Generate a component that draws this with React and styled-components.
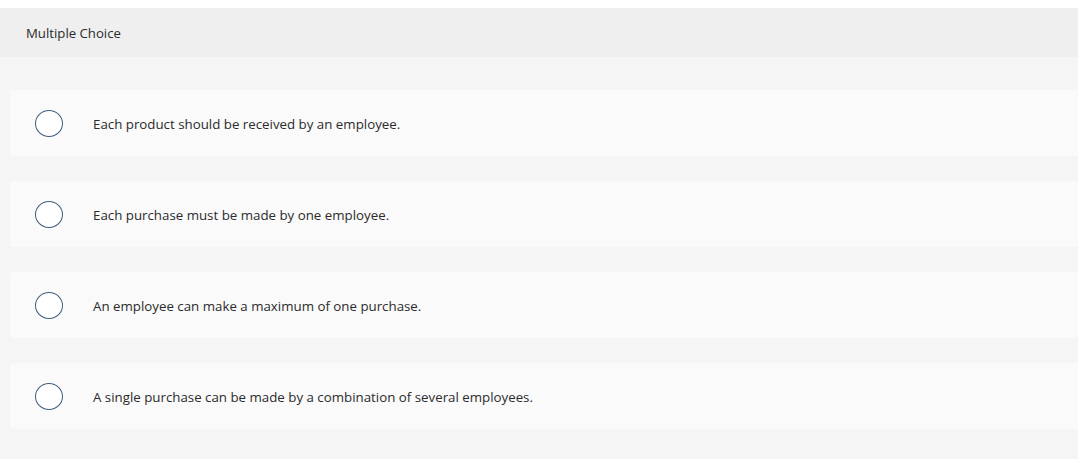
import React from "react";
import styled, { createGlobalStyle } from "styled-components";

const Global = createGlobalStyle`
  html, body { margin: 0; padding: 0; background: #ffffff; }
  body { font-family: "Open Sans", Lato, sans-serif; }
`;

const Page = styled.div`
  padding-top: 8px;
  background: #ffffff;
  min-height: 451px;
`;

const Header = styled.div`
  height: 49px;
  background: #efefef;
  display: flex;
  align-items: center;
  padding-left: 26px;
  padding-top: 1px;
  box-sizing: border-box;
  font-size: 13.2px;
  color: #2b2b2b;
`;

const Body = styled.div`
  background: #f5f5f5;
  padding: 33px 0 30px 10px;
  display: flex;
  flex-direction: column;
  gap: 25px;
`;

const Option = styled.label`
  display: flex;
  align-items: center;
  height: 66px;
  background: #fafafa;
  border-radius: 3px 0 0 3px;
  padding-left: 25px;
  gap: 30px;
  font-size: 13.3px;
  color: #2b2b2b;
  cursor: pointer;
`;

const Radio = styled.span`
  box-sizing: border-box;
  width: 28px;
  height: 27px;
  border-radius: 50%;
  border: 1.5px solid #3f5d7d;
  background: #ffffff;
  flex: none;
`;

const Text = styled.span`
  padding-top: 2px;
`;

const options = [
  "Each product should be received by an employee.",
  "Each purchase must be made by one employee.",
  "An employee can make a maximum of one purchase.",
  "A single purchase can be made by a combination of several employees.",
];

export default function App() {
  return (
    <>
      <Global />
      <Page>
        <Header>Multiple Choice</Header>
        <Body>
          {options.map((o) => (
            <Option key={o}>
              <Radio />
              <Text>{o}</Text>
            </Option>
          ))}
        </Body>
      </Page>
    </>
  );
}
